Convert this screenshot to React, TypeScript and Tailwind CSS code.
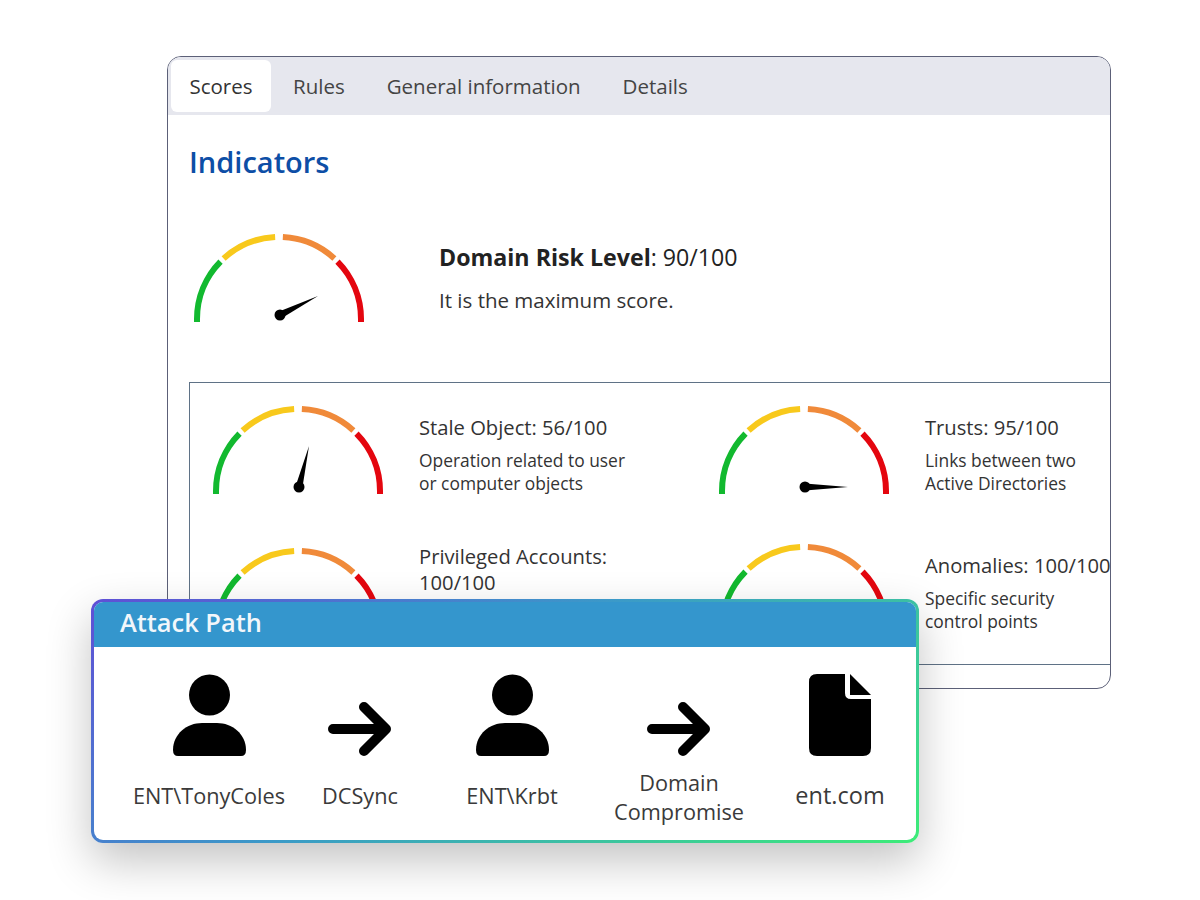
const polar = (cx: number, cy: number, r: number, deg: number) => {
  const a = (deg * Math.PI) / 180;
  return [cx + r * Math.cos(a), cy - r * Math.sin(a)];
};

const arc = (from: number, to: number) => {
  const [x1, y1] = polar(86, 85, 82, from);
  const [x2, y2] = polar(86, 85, 82, to);
  return `M${x1} ${y1} A82 82 0 0 1 ${x2} ${y2}`;
};

// tip is relative to the hub
const Gauge = ({ tipX, tipY }: { tipX: number; tipY: number }) => {
  const hubX = 87;
  const hubY = 81;
  const len = Math.hypot(tipX, tipY);
  const nx = (-tipY / len) * 3.5;
  const ny = (tipX / len) * 3.5;
  return (
    <svg width="172" height="92" viewBox="0 0 172 92" className="shrink-0">
      <g fill="none" strokeWidth="6">
        <path d={`M4 88 V85 ${arc(180, 135.5).replace("M", "L")}`} stroke="#12b92f" />
        <path d={arc(132.5, 92.7)} stroke="#f8c91c" />
        <path d={arc(87.3, 47.5)} stroke="#f08a3a" />
        <path d={`${arc(44.5, 0)} V88`} stroke="#e4060f" />
      </g>
      <path
        d={`M${hubX + nx} ${hubY + ny} L${hubX + tipX} ${hubY + tipY} L${hubX - nx} ${hubY - ny} Z`}
        fill="#000"
      />
      <circle cx={hubX} cy={hubY} r="5.5" fill="#000" />
    </svg>
  );
};

const PersonIcon = () => (
  <svg width="73" height="82" viewBox="0 0 73 82">
    <circle cx="36.5" cy="21" r="20.5" fill="#000" />
    <path d="M5 82 Q0 82 0 76 C0 60 14 49 29 49 H44 C59 49 73 60 73 76 Q73 82 68 82 Z" fill="#000" />
  </svg>
);

const ArrowIcon = () => (
  <svg width="64" height="54" viewBox="0 0 64 54">
    <path
      d="M5 27 H58 M36 5 L58 27 L36 49"
      fill="none"
      stroke="#000"
      strokeWidth="10"
      strokeLinecap="round"
      strokeLinejoin="round"
    />
  </svg>
);

const FileIcon = () => (
  <svg width="62" height="82" viewBox="0 0 62 82">
    <path d="M8 0 H36 V19 Q36 25 42 25 H62 V74 Q62 82 54 82 H8 Q0 82 0 74 V8 Q0 0 8 0 Z" fill="#000" />
    <path d="M41 0 L62 21 H41 Z" fill="#000" />
  </svg>
);

const tabs = ["Rules", "General information", "Details"];

const Indicator = ({
  title,
  desc,
  tipX,
  tipY,
  gaugeClass,
  textClass = "pt-[8px]",
}: {
  title: string;
  desc?: string[];
  tipX: number;
  tipY: number;
  gaugeClass?: string;
  textClass?: string;
}) => (
  <div className="flex items-start gap-[35px]">
    <div className={gaugeClass}>
      <Gauge tipX={tipX} tipY={tipY} />
    </div>
    <div className={`w-[225px] shrink-0 ${textClass}`}>
      <p className="text-[20.2px] leading-[26px] text-[#333]">{title}</p>
      {desc && (
        <p className="mt-[9px] text-[17.4px] leading-[23px] text-[#333]">
          {desc[0]}
          <br />
          {desc[1]}
        </p>
      )}
    </div>
  </div>
);

const Step = ({
  icon,
  label,
  className,
  labelClass = "text-[21.7px] pb-[4px]",
}: {
  icon: React.ReactNode;
  label: React.ReactNode;
  className: string;
  labelClass?: string;
}) => (
  <div className={`flex flex-col items-center ${className}`}>
    <div className="flex h-[82px] items-end">{icon}</div>
    <div className={`flex h-[82px] items-center text-center leading-[29px] whitespace-nowrap text-[#3a3a3a] ${labelClass}`}>
      <span>{label}</span>
    </div>
  </div>
);

export default function App() {
  return (
    <div className="relative h-[900px] w-[1200px] overflow-hidden bg-white pt-[56px] pl-[167px] font-['Open_Sans',sans-serif]">
      {/* Report window */}
      <div className="h-[633px] w-[944px] overflow-hidden rounded-[14px] border border-[#5c6078] bg-white">
        <div className="flex h-[58px] items-start bg-[#e6e7ee] pt-[3px] pl-[3px]">
          <div className="flex h-[52px] w-[100px] items-center justify-center rounded-[6px] bg-white text-[20.5px] text-[#333]">
            Scores
          </div>
          <div className="ml-[22px] flex h-[52px] items-center gap-[42px] text-[20.5px] text-[#444]">
            {tabs.map((tab) => (
              <span key={tab}>{tab}</span>
            ))}
          </div>
        </div>

        <div className="pl-[21px]">
          <h2 className="mt-[27px] text-[29px] leading-[40px] font-semibold text-[#0d4ea6]">Indicators</h2>

          <div className="mt-[52px] flex items-start">
            <div className="ml-[4px]">
              <Gauge tipX={38} tipY={-19} />
            </div>
            <div className="ml-[74px] pt-[8px]">
              <p className="text-[23.2px] leading-[30px] text-[#222]">
                <b className="font-bold">Domain Risk Level</b>: 90/100
              </p>
              <p className="mt-[14px] text-[20.5px] leading-[28px] text-[#333]">It is the maximum score.</p>
            </div>
          </div>

          <div className="mt-[56px] h-[283px] w-[1000px] border border-[#5f7286] pt-[23px] pl-[22px]">
            <div className="grid grid-cols-[506px_440px] grid-rows-[138px_120px]">
              <Indicator
                title="Stale Object: 56/100"
                desc={["Operation related to user", "or computer objects"]}
                tipX={10}
                tipY={-41}
              />
              <Indicator
                title="Trusts: 95/100"
                desc={["Links between two", "Active Directories"]}
                tipX={43}
                tipY={0}
              />
              <Indicator
                title="Privileged Accounts: 100/100"
                tipX={43}
                tipY={0}
                gaugeClass="mt-[4px]"
                textClass="-mt-[1px]"
              />
              <Indicator
                title="Anomalies: 100/100"
                desc={["Specific security", "control points"]}
                tipX={43}
                tipY={0}
              />
            </div>
          </div>
        </div>
      </div>

      {/* Attack path popup */}
      <div className="absolute top-[599px] left-[91px] h-[244px] w-[828px] rounded-[12px] bg-[linear-gradient(145deg,#5f4fd6_0%,#3b9ac8_45%,#3dec78_100%)] p-[3px] shadow-[0_18px_45px_rgba(0,0,0,0.24)]">
        <div className="h-full overflow-hidden rounded-[9px] bg-white">
          <div className="flex h-[45px] items-center bg-[#3496cd] pb-[5px] pl-[26px] text-[25.4px] font-semibold text-[#f2f7fb]">
            Attack Path
          </div>
          <div className="flex pt-[27px] pl-[35px]">
            <Step className="w-[160px]" icon={<PersonIcon />} label="ENT\TonyColes" />
            <Step className="ml-[26px] w-[90px]" icon={<ArrowIcon />} label="DCSync" />
            <Step className="ml-[47px] w-[120px]" icon={<PersonIcon />} label="ENT\Krbt" />
            <Step
              className="ml-[37px] w-[140px]"
              icon={<ArrowIcon />}
              labelClass="text-[21.7px]"
              label={
                <>
                  Domain
                  <br />
                  Compromise
                </>
              }
            />
            <Step
              className="ml-[41px] w-[100px]"
              icon={<FileIcon />}
              labelClass="text-[23.5px] pb-[4px]"
              label="ent.com"
            />
          </div>
        </div>
      </div>
    </div>
  );
}
